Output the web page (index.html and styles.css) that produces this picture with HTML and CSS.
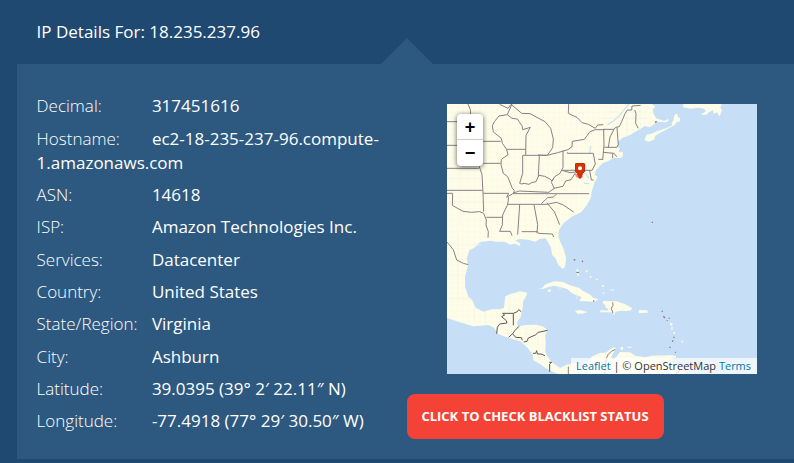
FILE: index.html
```html
<!DOCTYPE html>
<html lang="en">
<head>
<meta charset="utf-8">
<title>IP Details</title>
<link rel="stylesheet" href="styles.css">
</head>
<body>
<h1 class="title">IP Details For: 18.235.237.96</h1>
<main class="panel">
  <section class="details">
    <p><span>Decimal:</span>317451616</p>
    <p><span>Hostname:</span>ec2-18-235-237-96.compute-<br>1.amazonaws.com</p>
    <p><span>ASN:</span>14618</p>
    <p><span>ISP:</span>Amazon Technologies Inc.</p>
    <p><span>Services:</span>Datacenter</p>
    <p><span>Country:</span>United States</p>
    <p><span>State/Region:</span>Virginia</p>
    <p><span>City:</span>Ashburn</p>
    <p><span>Latitude:</span>39.0395 (39° 2′ 22.11″ N)</p>
    <p><span>Longitude:</span>-77.4918 (77° 29′ 30.50″ W)</p>
  </section>
  <section class="side">
    <div class="map">
      <svg class="tiles" viewBox="21 27 930 810" preserveAspectRatio="none">
        <defs>
          <pattern id="counties" width="17" height="17" patternUnits="userSpaceOnUse"><path d="M0 1H17M1 0V17" stroke="#f9faea" stroke-width="2"/></pattern>
          <path id="mainland" d="M21 27H635L646 35L638 42L640 55L648 70L646 85L630 97L615 93L595 105L570 120L545 130L535 140L530 155L540 160L535 172L549 172L547 186L540 189L525 188L500 200L480 207L488 204L468 226L464 240L473 245L463 264L455 290L452 310L440 331L425 350L395 365L370 385L357 405L355 425L362 443L370 460L378 490L375 515L368 522L355 510L347 490L337 481L332 455L317 430L300 431L285 440L265 434L240 432L226 436L238 444L242 454L225 446L210 449L194 440L170 440L150 437L120 441L103 458L88 466L80 490L84 511L75 545L75 575L85 605L98 618L105 637L130 650L155 643L180 643L192 638L196 604L210 598L240 589L262 593L258 604L249 620L248 640L242 665L232 680L233 695L255 690L290 689L310 695L323 706L315 720L317 740L316 770L320 780L335 802L360 819L380 809L410 803L430 820L455 785L480 774L497 773L520 757L528 760L514 785L520 797L540 771L570 772L586 782L615 787L635 782L700 781L690 798L712 810L741 837H355L325 824L299 806L280 796L278 779L263 758L241 739L210 730L176 718L160 697L145 690L100 694L60 682L21 669Z"/>
        </defs>
        <path class="sea" d="M21 27H951V837H21Z"/>
        <g class="land"><use href="#mainland"/><use href="#mainland" fill="url(#counties)"/>
          <path d="M614 134L620 119L635 116L650 109L680 99L697 91L695 84L701 75L702 62L711 55L714 67L720 69L720 79L710 82L703 91L693 96L675 106L660 114L646 122L642 134L627 140L617 137Z"/>
          <path d="M642 79L645 69L658 73L670 77L680 76L682 70L686 77L677 82L659 80ZM730 27H845L841 38L846 45L839 64L831 52L821 57L819 45L803 54L801 59L782 59L798 49L793 41L775 38L753 41L729 37Z"/>
          <path d="M293 583L306 579L317 568L343 559L369 561L388 570L418 579L430 588L451 599L459 608L475 613L465 620L417 618L425 607L399 596L382 583L364 577L341 572L323 577L310 581ZM324 584L333 583L331 591L323 590ZM405 647L421 645L442 651L428 656L412 656Z"/>
          <path d="M480 645L503 647L505 642L494 636L498 633L488 623L490 618L513 619L530 619L555 628L576 639L573 646L558 648L545 647L526 650L523 660L513 652L483 652ZM596 645L622 646L623 653L597 654Z"/>
          <path d="M400 493L405 492L404 496ZM409 524L414 521L418 544L411 540ZM421 493L428 499L425 503ZM438 526h4v6h-4zM450 543h4v5h-4zM468 551h5v5h-5zM485 595l8-3v5zM508 584l13 3v-4zM486 570h5v5h-5zM542 756h7v8h-7zM562 755h13v3h-13zM690 682l8 4-3 7-5-3zM694 696h4v8h-4zM700 711h5v5h-5zM724 738h6v4h-6zM691 783h17v5h-17z"/>
        </g>
        <path class="inland-water" d="M567 27L555 40L542 58L521 78L503 89M452 153L449 175M436 205L438 225L431 239M432 265L448 266M438 235L446 250"/>
        <g class="county-lines">
          <path d="M60 225V390M25 250H120M25 320H200M30 450H125M25 610H95M26 540H75M54 420V610M103 640V680M135 650V685M210 603V650M260 700V750M294 690V760M360 571V585M411 582V614M505 625V655M550 630V650M500 50H590M485 70H620M560 50V125M600 35V105"/>
        </g>
        <g class="borders">
          <path d="M84 27L91 44L92 62M21 80H51M21 151H51M21 220H116M21 286H127M116 210L126 238L129 295H206L200 307L218 296H447M130 139H182M129 205H182M21 295H38L37 331L51 339L69 349L94 352L119 350L131 355L139 375L138 390L145 410L144 428M129 295L131 350M139 367H187M203 328H320L350 322L370 330L401 351M206 307L203 328L188 360L187 390L179 409H211L216 422M239 329L233 419M282 329L293 389L291 415M245 410L292 410L295 415L337 417L341 426M320 323L343 350L359 389M304 326L323 308L340 306L350 297"/>
          <path d="M216 27L202 59L177 63L163 80L157 92L160 111L184 130L187 145L200 163L204 179L184 193L183 209L190 235L203 245L217 280L223 286L220 297M179 28L204 40L213 28L245 55L270 56L315 80L332 100L340 132L338 158L322 181L294 180M202 59L216 70L232 72L247 94L248 104L271 97L258 121L257 180M199 163H257M248 181H298L295 245M248 181V235L239 265L245 267L252 265L267 268L276 262L287 261L297 241L314 244L330 252L336 258L344 245L360 235L369 217V166M294 181L322 181L353 173L384 164L396 155L397 139L433 133L450 110L466 104H494M382 172V175H460L463 192L466 207L456 226H369M366 226L390 233L409 231L411 228M220 294L238 288L326 292L343 280L334 262L340 251M341 280L369 274L377 258L393 254L406 234M386 27L385 55L412 68L426 83L445 88L466 100L473 90L490 89M449 226L454 255H461M475 193L488 193M21 441L40 464L50 495L70 505L85 509"/>
          <path d="M489 103H522L527 97L538 95L545 80L555 56L562 45L575 45L576 33L602 31M584 45L588 55L587 85L595 100M491 103L492 150L488 195M493 157H530L535 149L531 97M522 103L510 126L505 157M490 172L522 175L530 185M518 175V190"/>
          <path class="dark" d="M170 716L172 697L179 687L201 684L199 677L185 665L194 660L188 655H220V691M206 727L218 716M220 655L232 650L236 644L244 650M237 694L225 706L218 716L227 727L244 728L247 736M251 741L261 739L265 729L286 720L295 712L323 706M279 775H287L290 767L292 777L303 777L315 782M328 802H335L329 807V830"/>
          <path d="M385 815V837M494 837L499 790L505 778L514 769L526 763M709 837L720 826M518 622L519 631L514 640L519 655"/>
          <path class="islets" d="M401 496L406 493M425 497L429 501M409 532L417 533M459 618H463M645 82L650 79M635 382H639M665 649H669M670 664L675 669M682 676V678M688 668V671M702 725V729M698 736V740M690 755V759M705 772H708"/>
        </g>
      </svg>
      <svg class="pin" viewBox="0 0 14 18"><path class="glow" d="M2 11H9L10 14L7 16L3 14Z"/><path class="body" d="M3 .5H11Q11.5.5 11.5 1V8.5L9.5 10.5L7.5 15H6.5L4.5 10.5L2.5 8.5V1Q2.5.5 3 .5Z"/><circle cx="7" cy="5.2" r="2"/></svg>
      <div class="zoom"><button aria-label="Zoom in">+</button><button aria-label="Zoom out">−</button></div>
      <div class="credit"><a>Leaflet</a> | © OpenStreetMap <a>Terms</a></div>
    </div>
    <button class="check">CLICK TO CHECK BLACKLIST STATUS</button>
  </section>
</main>
</body>
</html>
```
FILE: styles.css
```css
* { box-sizing: border-box; }
body {
  margin: 0;
  height: 463px;
  overflow: hidden;
  background: #1f4971;
  color: #fff;
  font: 17px/24.28px "Open Sans", sans-serif;
}
.title {
  margin: 0;
  height: 64px;
  padding: 20px 0 0 36.6px;
  font-size: 17px;
  font-weight: 400;
  line-height: 24px;
}
.panel {
  position: relative;
  display: flex;
  height: 395px;
  margin-left: 17px;
  padding: 30.25px 0 0 19.6px;
  background: #2d5980;
}
.panel::before {
  content: "";
  position: absolute;
  top: -26px;
  left: 364px;
  border: solid transparent;
  border-width: 0 26px 26px;
  border-bottom-color: #2d5980;
}
.details { width: 370.4px; }
.details p { margin: 0 0 8px; white-space: nowrap; }
.details span { display: inline-block; width: 115.3px; font-weight: 300; }
.side { padding-top: 9.75px; }
.map {
  position: relative;
  width: 310px;
  height: 270px;
  margin-left: 40px;
  overflow: hidden;
}
.tiles { display: block; width: 310px; height: 270px; }
.sea { fill: #c6dff6; }
.land { fill: #fefde8; }
.inland-water, .county-lines { fill: none; stroke: #cfe3ee; stroke-width: 4; }
.county-lines { stroke: #f3f5e9; stroke-width: 2; }
.borders { fill: none; stroke: #8c7f87; stroke-width: 3; stroke-linejoin: round; }
.dark { stroke: #62545f; }
.islets { stroke: #8c817f; stroke-width: 4; }
.pin { position: absolute; left: 126px; top: 59px; width: 14px; height: 18px; }
.body { fill: #d93204; stroke: #b92c06; }
.glow { fill: #f58a7c; }
.pin circle { fill: #fff; }
.zoom {
  position: absolute;
  top: 10px;
  left: 10px;
  width: 26px;
  border-radius: 4px;
  background: #fff;
  box-shadow: 0 1px 5px rgba(0, 0, 0, .65);
}
.zoom button {
  display: block;
  width: 26px;
  height: 26px;
  padding: 0;
  border: 0;
  background: none;
  color: #000;
  font: bold 18px/26px "Liberation Sans", sans-serif;
}
.zoom button:first-child { border-bottom: 1px solid #ccc; }
.credit {
  position: absolute;
  right: 0;
  bottom: 0;
  width: 186px;
  height: 16px;
  padding-left: 5px;
  background: rgba(255, 255, 255, .7);
  color: #333;
  font-size: 11px;
  line-height: 16px;
  white-space: nowrap;
}
.credit a { color: #0078a8; }
.check {
  display: block;
  width: 257px;
  height: 45px;
  margin-top: 20px;
  padding: 0 1px 0 0;
  border: 0;
  border-radius: 8px;
  background: #f44336;
  color: #fff;
  font: bold 13px/45px "Open Sans", sans-serif;
  white-space: nowrap;
}
```
